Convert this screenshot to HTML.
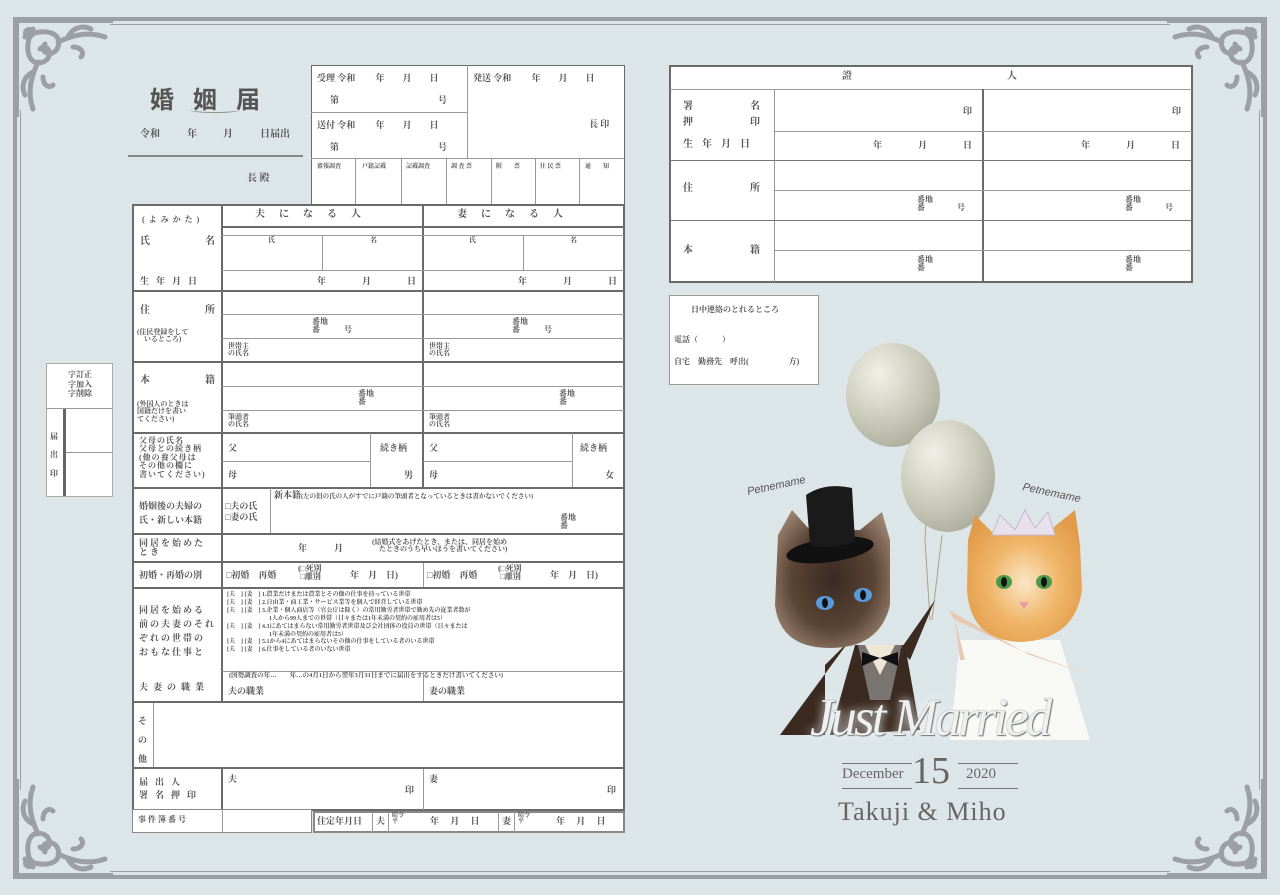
<!DOCTYPE html>
<html><head><meta charset="utf-8">
<style>
*{margin:0;padding:0;box-sizing:border-box}
body{width:1280px;height:895px;background:#dce6e8;position:relative;overflow:hidden;font-family:"Liberation Serif","Noto Serif CJK SC","Noto Sans CJK JP",serif;color:#444}
.a{position:absolute;white-space:nowrap}
.bx{position:absolute;background:#fff;border:2px solid #6a6a6a}
.h{position:absolute;height:0;border-top:1px solid #999}
.H{position:absolute;height:0;border-top:2px solid #6a6a6a}
.v{position:absolute;width:0;border-left:1px solid #999}
.V{position:absolute;width:0;border-left:2px solid #6a6a6a}
.t{position:absolute;white-space:nowrap;font-size:10px;font-weight:bold;color:#555;line-height:1}
.s{position:absolute;white-space:nowrap;font-size:7px;font-weight:bold;color:#555;line-height:1.05}
</style></head><body>

<!-- frame -->
<div class="a" style="left:110px;top:17px;width:1060px;height:4px;background:#9aa0a4"></div>
<div class="a" style="left:110px;top:24px;width:1060px;height:1px;background:#9aa0a4"></div>
<div class="a" style="left:110px;top:875px;width:1060px;height:4px;background:#9aa0a4"></div>
<div class="a" style="left:110px;top:871px;width:1060px;height:1px;background:#9aa0a4"></div>
<div class="a" style="left:13px;top:110px;width:4px;height:680px;background:#9aa0a4"></div>
<div class="a" style="left:20px;top:110px;width:1px;height:680px;background:#9aa0a4"></div>
<div class="a" style="left:1263px;top:110px;width:4px;height:680px;background:#9aa0a4"></div>
<div class="a" style="left:1259px;top:110px;width:1px;height:680px;background:#9aa0a4"></div>
<svg class="a" style="left:0;top:0" width="1280" height="895">
<defs>
<g id="cn" fill="none" stroke="#9aa0a4" stroke-width="5" stroke-linecap="round">
<rect x="0" y="0" width="6" height="100" fill="#9aa0a4" stroke="none"/>
<rect x="0" y="0" width="100" height="6" fill="#9aa0a4" stroke="none"/>
<path d="M12 20 C30 10 50 15 45 30 C40 42 25 35 32 27"/>
<path d="M20 12 C10 30 15 50 30 45 C42 40 35 25 27 32"/>
<path d="M45 25 C60 18 75 14 92 20"/>
<path d="M25 45 C18 60 14 75 20 92"/>
<path d="M55 20 C60 10 70 8 78 12"/>
<path d="M20 55 C10 60 8 70 12 78"/>
<path d="M60 30 C68 30 72 36 68 40"/>
<path d="M30 60 C30 68 36 72 40 68"/>
<circle cx="16" cy="16" r="6" fill="#9aa0a4" stroke="none"/>
</g></defs>
<use href="#cn" transform="translate(13,17)"/>
<use href="#cn" transform="translate(1267,17) scale(-1,1)"/>
<use href="#cn" transform="translate(13,879) scale(1,-1)"/>
<use href="#cn" transform="translate(1267,879) scale(-1,-1)"/>
</svg>

<!-- title -->
<div class="a" style="left:150px;top:80px;font-size:24px;font-weight:bold;color:#555;letter-spacing:19px;font-family:'Noto Sans CJK JP',sans-serif">婚姻届</div>
<div class="a" style="left:190px;top:107px;width:50px;height:6px;border-bottom:1.5px solid #888;border-radius:50%"></div>
<div class="t" style="left:140px;top:130px">令和</div><div class="t" style="left:187px;top:130px">年</div><div class="t" style="left:223px;top:130px">月</div><div class="t" style="left:260px;top:130px">日届出</div>
<div class="a" style="left:128px;top:155px;width:175px;height:1.5px;background:#888"></div>
<div class="t" style="left:247px;top:174px">長 殿</div>

<!-- top box -->
<div class="bx" style="left:311px;top:65px;width:314px;height:140px;border-width:1.5px"></div>
<div class="v" style="left:467px;top:65px;height:94px"></div>
<div class="h" style="left:311px;top:112px;width:156px"></div>
<div class="h" style="left:311px;top:158px;width:313px"></div>
<div class="v" style="left:355px;top:158px;height:46px"></div><div class="v" style="left:401px;top:158px;height:46px"></div><div class="v" style="left:446px;top:158px;height:46px"></div><div class="v" style="left:491px;top:158px;height:46px"></div><div class="v" style="left:535px;top:158px;height:46px"></div><div class="v" style="left:579px;top:158px;height:46px"></div>
<div class="t" style="left:317px;top:74px;font-size:9px">受理 令和 　　年　　月　　日</div>
<div class="t" style="left:330px;top:96px;font-size:9px">第</div><div class="t" style="left:438px;top:96px;font-size:9px">号</div>
<div class="t" style="left:317px;top:121px;font-size:9px">送付 令和 　　年　　月　　日</div>
<div class="t" style="left:330px;top:143px;font-size:9px">第</div><div class="t" style="left:438px;top:143px;font-size:9px">号</div>
<div class="t" style="left:473px;top:74px;font-size:9px">発送 令和 　　年　　月　　日</div>
<div class="t" style="left:589px;top:120px;font-size:9px">長 印</div>
<div class="s" style="left:317px;top:164px;font-size:6px">審報調査</div><div class="s" style="left:362px;top:164px;font-size:6px">戸籍記載</div><div class="s" style="left:406px;top:164px;font-size:6px">記載調査</div><div class="s" style="left:451px;top:164px;font-size:6px">調 査 票</div><div class="s" style="left:496px;top:164px;font-size:6px">附　　票</div><div class="s" style="left:540px;top:164px;font-size:6px">住 民 票</div><div class="s" style="left:585px;top:164px;font-size:6px">通　　知</div>

<!-- main form -->
<div class="bx" style="left:132px;top:204px;width:493px;height:607px"></div>
<div class="V" style="left:221px;top:204px;height:498px"></div>
<div class="V" style="left:221px;top:768px;height:42px"></div>
<div class="v" style="left:153px;top:702px;height:66px"></div>
<div class="V" style="left:422px;top:204px;height:284px"></div>
<div class="v" style="left:423px;top:562px;height:26px"></div>
<div class="v" style="left:423px;top:672px;height:30px"></div>
<div class="v" style="left:423px;top:768px;height:42px"></div>
<div class="H" style="left:222px;top:226px;width:402px"></div>
<div class="h" style="left:222px;top:235px;width:402px"></div>
<div class="v" style="left:322px;top:235px;height:35px"></div><div class="v" style="left:523px;top:235px;height:35px"></div>
<div class="h" style="left:222px;top:270px;width:402px"></div>
<div class="H" style="left:132px;top:290px;width:492px"></div>
<div class="h" style="left:222px;top:314px;width:402px"></div>
<div class="h" style="left:222px;top:338px;width:402px"></div>
<div class="H" style="left:132px;top:361px;width:492px"></div>
<div class="h" style="left:222px;top:386px;width:402px"></div>
<div class="h" style="left:222px;top:410px;width:402px"></div>
<div class="H" style="left:132px;top:432px;width:492px"></div>
<div class="v" style="left:370px;top:433px;height:55px"></div><div class="v" style="left:572px;top:433px;height:55px"></div>
<div class="h" style="left:222px;top:461px;width:148px"></div><div class="h" style="left:423px;top:461px;width:149px"></div>
<div class="H" style="left:132px;top:487px;width:492px"></div>
<div class="v" style="left:270px;top:488px;height:46px"></div>
<div class="H" style="left:132px;top:533px;width:492px"></div>
<div class="H" style="left:132px;top:561px;width:492px"></div>
<div class="H" style="left:132px;top:587px;width:492px"></div>
<div class="h" style="left:222px;top:671px;width:402px"></div>
<div class="H" style="left:132px;top:701px;width:492px"></div>
<div class="H" style="left:132px;top:767px;width:492px"></div>

<div class="t" style="left:142px;top:216px;font-size:8px;letter-spacing:4px">(よみかた)</div>
<div class="t" style="left:140px;top:237px">氏</div><div class="t" style="left:205px;top:237px">名</div>
<div class="t" style="left:140px;top:277px;font-size:9px;letter-spacing:7px">生年月日</div>
<div class="t" style="left:255px;top:210px;letter-spacing:14px">夫になる人</div>
<div class="t" style="left:457px;top:210px;letter-spacing:14px">妻になる人</div>
<div class="s" style="left:268px;top:237px">氏</div><div class="s" style="left:370px;top:237px">名</div>
<div class="s" style="left:469px;top:237px">氏</div><div class="s" style="left:570px;top:237px">名</div>
<div class="t" style="left:317px;top:277px;font-size:9px">年　　　　月　　　　日</div>
<div class="t" style="left:518px;top:277px;font-size:9px">年　　　　月　　　　日</div>
<div class="t" style="left:140px;top:306px">住</div><div class="t" style="left:205px;top:306px">所</div>
<div class="s" style="left:137px;top:329px">(住民登録をして<br>　いるところ)</div>
<div class="s" style="left:312px;top:318px;font-size:8px">番地<br>番　　　号</div>
<div class="s" style="left:512px;top:318px;font-size:8px">番地<br>番　　　号</div>
<div class="s" style="left:228px;top:343px">世帯主<br>の氏名</div><div class="s" style="left:429px;top:343px">世帯主<br>の氏名</div>
<div class="t" style="left:140px;top:376px">本</div><div class="t" style="left:205px;top:376px">籍</div>
<div class="s" style="left:137px;top:401px">(外国人のときは<br>国籍だけを書い<br>てください)</div>
<div class="s" style="left:358px;top:390px;font-size:8px">番地<br>番</div><div class="s" style="left:559px;top:390px;font-size:8px">番地<br>番</div>
<div class="s" style="left:228px;top:414px">筆頭者<br>の氏名</div><div class="s" style="left:429px;top:414px">筆頭者<br>の氏名</div>
<div class="s" style="left:139px;top:437px;font-size:8px;letter-spacing:1px">父母の氏名<br>父母との続き柄<br>(他の養父母は<br>その他の欄に<br>書いてください)</div>
<div class="t" style="left:228px;top:444px;font-size:9px">父</div><div class="t" style="left:228px;top:471px;font-size:9px">母</div>
<div class="t" style="left:380px;top:444px;font-size:9px">続き柄</div><div class="t" style="left:404px;top:471px;font-size:9px">男</div>
<div class="t" style="left:429px;top:444px;font-size:9px">父</div><div class="t" style="left:429px;top:471px;font-size:9px">母</div>
<div class="t" style="left:580px;top:444px;font-size:9px">続き柄</div><div class="t" style="left:605px;top:471px;font-size:9px">女</div>
<div class="s" style="left:139px;top:499px;font-size:9px;line-height:1.6">婚姻後の夫婦の<br>氏・新しい本籍</div>
<div class="s" style="left:225px;top:501px;font-size:9px;line-height:1.25">□夫の氏<br>□妻の氏</div>
<div class="s" style="left:274px;top:491px;font-size:9px">新本籍<span style="font-size:6.5px">(左の旧の氏の人がすでに戸籍の筆頭者となっているときは書かないでください)</span></div>
<div class="s" style="left:560px;top:514px;font-size:8px">番地<br>番</div>
<div class="s" style="left:139px;top:539px;font-size:9px;letter-spacing:2px">同居を始めた<br>とき</div>
<div class="t" style="left:298px;top:544px;font-size:9px">年　　　月</div>
<div class="s" style="left:372px;top:539px;font-size:7px">(結婚式をあげたとき、または、同居を始め<br>　たときのうち早いほうを書いてください)</div>
<div class="s" style="left:139px;top:571px;font-size:9px">初婚・再婚の別</div>
<div class="s" style="left:226px;top:571px;font-size:9px">□初婚　再婚</div>
<div class="s" style="left:298px;top:565px;font-size:8px">(□死別<br>&nbsp;□離別</div>
<div class="t" style="left:350px;top:571px;font-size:9px">年　月　日)</div>
<div class="s" style="left:427px;top:571px;font-size:9px">□初婚　再婚</div>
<div class="s" style="left:498px;top:565px;font-size:8px">(□死別<br>&nbsp;□離別</div>
<div class="t" style="left:550px;top:571px;font-size:9px">年　月　日)</div>
<div class="s" style="left:139px;top:604px;font-size:9px;line-height:1.55;letter-spacing:2px">同居を始める<br>前の夫妻のそれ<br>ぞれの世帯の<br>おもな仕事と</div>
<div class="s" style="left:139px;top:683px;font-size:9px;letter-spacing:5px">夫妻の職業</div>
<div class="s" style="left:227px;top:592px;font-size:6px;line-height:1.32">[夫　] [妻　] 1.農業だけまたは農業とその他の仕事を持っている世帯<br>[夫　] [妻　] 2.自由業・商工業・サービス業等を個人で経営している世帯<br>[夫　] [妻　] 3.企業・個人商店等（官公庁は除く）の常用勤労者世帯で勤め先の従業者数が<br>　　　　　　　1人から99人までの世帯（日々または1年未満の契約の雇用者は5）<br>[夫　] [妻　] 4.3にあてはまらない常用勤労者世帯及び会社団体の役員の世帯（日々または<br>　　　　　　　1年未満の契約の雇用者は5）<br>[夫　] [妻　] 5.1から4にあてはまらないその他の仕事をしている者のいる世帯<br>[夫　] [妻　] 6.仕事をしている者のいない世帯</div>
<div class="s" style="left:229px;top:673px;font-size:6.5px">(国勢調査の年…　　年…の4月1日から翌年3月31日までに届出をするときだけ書いてください)</div>
<div class="s" style="left:228px;top:687px;font-size:9px">夫の職業</div><div class="s" style="left:429px;top:687px;font-size:9px">妻の職業</div>
<div class="s" style="left:138px;top:712px;font-size:9px;line-height:2.1">そ<br>の<br>他</div>
<div class="s" style="left:139px;top:776px;font-size:9px;letter-spacing:7px;line-height:1.4">届出人<br>署名押印</div>
<div class="s" style="left:228px;top:775px;font-size:9px">夫</div><div class="s" style="left:405px;top:786px;font-size:9px">印</div>
<div class="s" style="left:429px;top:775px;font-size:9px">妻</div><div class="s" style="left:607px;top:786px;font-size:9px">印</div>
<!-- bottom row -->
<div class="a" style="left:132px;top:809px;width:180px;height:24px;border:1.5px solid #888;background:#fff"></div>
<div class="v" style="left:222px;top:810px;height:22px"></div>
<div class="s" style="left:138px;top:816px;font-size:8px;letter-spacing:2px">事件簿番号</div>
<div class="a" style="left:313px;top:811px;width:312px;height:22px;border:2px solid #888;background:#fff"></div>
<div class="v" style="left:372px;top:812px;height:20px"></div><div class="v" style="left:388px;top:812px;height:20px"></div><div class="v" style="left:498px;top:812px;height:20px"></div><div class="v" style="left:514px;top:812px;height:20px"></div>
<div class="s" style="left:317px;top:817px;font-size:9px">住定年月日</div>
<div class="s" style="left:376px;top:817px;font-size:9px">夫</div><div class="s" style="left:392px;top:813px;font-size:6px">昭令<br>平</div>
<div class="s" style="left:430px;top:817px;font-size:9px">年　 月　 日</div>
<div class="s" style="left:502px;top:817px;font-size:9px">妻</div><div class="s" style="left:518px;top:813px;font-size:6px">昭令<br>平</div>
<div class="s" style="left:556px;top:817px;font-size:9px">年　 月　 日</div>

<!-- left small box -->
<div class="a" style="left:46px;top:363px;width:67px;height:134px;border:1.5px solid #aaa;background:#fff"></div>
<div class="h" style="left:46px;top:408px;width:67px"></div>
<div class="h" style="left:64px;top:452px;width:49px"></div>
<div class="a" style="left:63px;top:409px;width:3px;height:87px;background:#666"></div>
<div class="s" style="left:68px;top:370px;font-size:8px;line-height:1.2">字訂正<br>字加入<br>字削除</div>
<div class="s" style="left:50px;top:428px;font-size:8px;line-height:2.3">届<br>出<br>印</div>

<!-- witness -->
<div class="bx" style="left:669px;top:65px;width:524px;height:218px"></div>
<div class="h" style="left:670px;top:89px;width:522px"></div>
<div class="v" style="left:774px;top:89px;height:193px"></div>
<div class="V" style="left:982px;top:89px;height:193px"></div>
<div class="h" style="left:775px;top:131px;width:417px"></div>
<div class="h" style="left:670px;top:160px;width:522px;border-color:#777"></div>
<div class="h" style="left:775px;top:190px;width:417px"></div>
<div class="h" style="left:670px;top:220px;width:522px;border-color:#777"></div>
<div class="h" style="left:775px;top:250px;width:417px"></div>
<div class="t" style="left:842px;top:72px">證</div><div class="t" style="left:1007px;top:72px">人</div>
<div class="t" style="left:683px;top:99px;line-height:1.6">署<br>押</div><div class="t" style="left:750px;top:99px;line-height:1.6">名<br>印</div>
<div class="t" style="left:683px;top:140px;letter-spacing:9px">生年月日</div>
<div class="t" style="left:683px;top:184px">住</div><div class="t" style="left:750px;top:184px">所</div>
<div class="t" style="left:683px;top:246px">本</div><div class="t" style="left:750px;top:246px">籍</div>
<div class="s" style="left:963px;top:107px;font-size:9px">印</div><div class="s" style="left:1172px;top:107px;font-size:9px">印</div>
<div class="s" style="left:873px;top:141px;font-size:9px">年　　　　月　　　　日</div>
<div class="s" style="left:1081px;top:141px;font-size:9px">年　　　　月　　　　日</div>
<div class="s" style="left:917px;top:196px;font-size:8px">番地<br>番　　　　号</div>
<div class="s" style="left:1125px;top:196px;font-size:8px">番地<br>番　　　　号</div>
<div class="s" style="left:917px;top:256px;font-size:8px">番地<br>番</div>
<div class="s" style="left:1125px;top:256px;font-size:8px">番地<br>番</div>

<!-- contact -->
<div class="a" style="left:669px;top:295px;width:150px;height:90px;border:1.5px solid #999;background:#fff"></div>
<div class="s" style="left:691px;top:306px;font-size:8px">日中連絡のとれるところ</div>
<div class="s" style="left:674px;top:336px;font-size:8px">電話（　　　）</div>
<div class="s" style="left:674px;top:358px;font-size:8px">自宅　勤務先　呼出(　　　　　方)</div>

<!-- illustration -->
<svg class="a" style="left:730px;top:330px" width="400" height="440">
<defs>
<radialGradient id="bl" cx="0.35" cy="0.3" r="0.8"><stop offset="0" stop-color="#f0f0e8"/><stop offset="0.6" stop-color="#c8c8b8"/><stop offset="1" stop-color="#a8a898"/></radialGradient>
<radialGradient id="ca" cx="0.5" cy="0.5" r="0.6"><stop offset="0" stop-color="#3a2a22"/><stop offset="0.6" stop-color="#5a4434"/><stop offset="1" stop-color="#9a8270"/></radialGradient>
<radialGradient id="cb" cx="0.5" cy="0.55" r="0.6"><stop offset="0" stop-color="#fbe6c6"/><stop offset="0.5" stop-color="#f0b66a"/><stop offset="1" stop-color="#e09a48"/></radialGradient>
</defs>
<path d="M200 120 L195 210 L200 290" stroke="#b0a080" fill="none"/>
<path d="M212 205 L202 290" stroke="#b0a080" fill="none"/>
<ellipse cx="163" cy="65" rx="47" ry="52" fill="url(#bl)"/>
<ellipse cx="218" cy="146" rx="47" ry="56" fill="url(#bl)"/>
<path d="M120 310 L50 405 L95 405 L95 335 Z" fill="#3a2a20"/>
<path d="M125 315 L175 315 L190 400 L100 405 Z" fill="#3a2a20"/>
<path d="M128 315 L172 315 L160 370 L140 370 Z" fill="#7a7470"/>
<path d="M135 315 L165 315 L150 345 Z" fill="#f0e6d6"/>
<path d="M170 320 L205 270 L180 330 Z" fill="#3a2a20"/>
<path d="M132 322 L150 328 L132 336 Z M168 322 L150 328 L168 336 Z" fill="#111"/>
<path d="M48 205 L62 180 L80 200 L130 200 L152 182 L160 210 L160 275 Q150 318 100 318 Q50 318 45 275 Z" fill="url(#ca)"/>
<ellipse cx="95" cy="273" rx="9" ry="7" fill="#5a9ad8"/><ellipse cx="133" cy="265" rx="9" ry="7" fill="#5a9ad8"/>
<ellipse cx="95" cy="273" rx="3" ry="5" fill="#111"/><ellipse cx="133" cy="265" rx="3" ry="5" fill="#111"/>
<ellipse cx="100" cy="220" rx="44" ry="12" fill="#111" transform="rotate(-8 100 220)"/>
<path d="M76 165 Q95 152 122 158 L125 212 Q100 220 80 215 Z" fill="#1a1a1a"/>
<path d="M230 310 L330 310 L360 410 L220 410 Z" fill="#fbfaf6" opacity="0.9"/>
<path d="M218 280 L300 325 L360 345 L290 320 L225 290 Z" fill="#e8c8b0"/>
<path d="M225 290 L235 330 L230 330 Z" fill="#e8c8b0"/>
<path d="M238 210 L245 185 L265 205 L320 200 L345 180 L350 215 L352 260 Q345 310 290 312 Q240 310 237 260 Z" fill="url(#cb)"/>
<path d="M262 205 L270 185 L285 200 L295 180 L305 198 L318 182 L325 205 Z" fill="#e8e0ea" stroke="#c8b8d0"/>
<ellipse cx="274" cy="252" rx="8" ry="7" fill="#4a9a48"/><ellipse cx="314" cy="252" rx="8" ry="7" fill="#4a9a48"/>
<ellipse cx="274" cy="252" rx="3" ry="5" fill="#111"/><ellipse cx="314" cy="252" rx="3" ry="5" fill="#111"/>
<path d="M289 272 L299 272 L294 279 Z" fill="#e89aa0"/>
<text x="18" y="165" font-family="Liberation Sans" font-style="italic" font-size="11" fill="#555" transform="rotate(-12 18 165)">Petnemame</text>
<text x="292" y="160" font-family="Liberation Sans" font-style="italic" font-size="11" fill="#555" transform="rotate(12 292 160)">Petnemame</text>
</svg>
<div class="a" style="left:810px;top:688px;font-family:'Liberation Serif',serif;font-style:italic;font-size:53px;color:#eef0f0;letter-spacing:-3px;text-shadow:0 0 1px #555,1px 1px 1px #777,0 0 10px #fff"><span>Just Married</span></div>
<div class="a" style="left:842px;top:763px;width:70px;height:1px;background:#777"></div>
<div class="a" style="left:842px;top:788px;width:70px;height:1px;background:#777"></div>
<div class="a" style="left:958px;top:763px;width:60px;height:1px;background:#777"></div>
<div class="a" style="left:958px;top:788px;width:60px;height:1px;background:#777"></div>
<div class="a" style="left:842px;top:766px;font-size:15px;color:#666">December</div>
<div class="a" style="left:912px;top:752px;font-size:38px;color:#666;line-height:1">15</div>
<div class="a" style="left:966px;top:766px;font-size:15px;color:#666">2020</div>
<div class="a" style="left:838px;top:797px;font-size:26px;color:#666;letter-spacing:1px">Takuji &amp; Miho</div>
</body></html>
